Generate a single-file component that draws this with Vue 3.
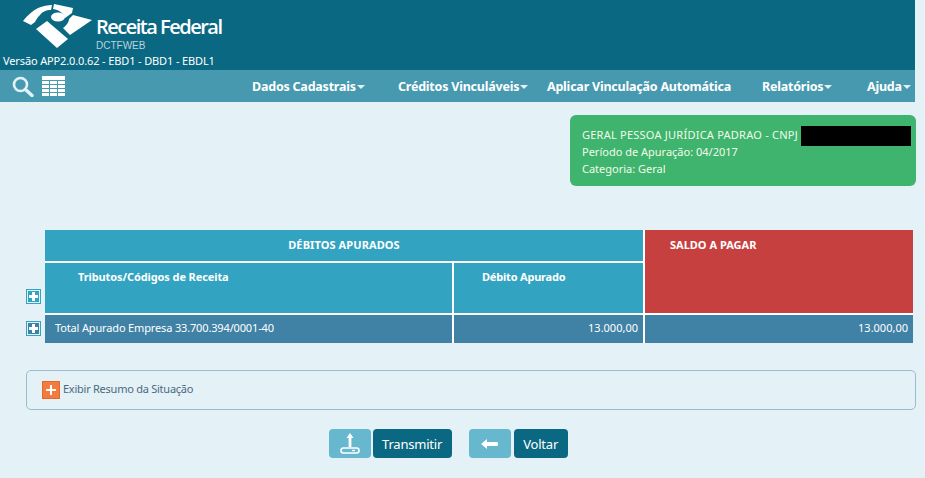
<script setup>
const menu = [
  { label: 'Dados Cadastrais', caret: true, cls: 'm1' },
  { label: 'Créditos Vinculáveis', caret: true, cls: 'm2' },
  { label: 'Aplicar Vinculação Automática', caret: false, cls: 'm3' },
  { label: 'Relatórios', caret: true, cls: 'm4' },
  { label: 'Ajuda', caret: true, cls: 'm5' }
]
</script>

<template>
  <div class="page">
    <header class="top">
      <div class="brand">
        <svg class="logo" width="96" height="53" viewBox="0 0 96 53">
          <path fill="#fff" d="M23 21 C28 15 32 11 38 8 C43 6 48 5 52 5 L51 10 C46 10 42 12 40 15 C37 18 36 20 35 22 L31 25 Z" />
          <path fill="#fff" d="M54 4 L73 8 L72 13 L65 18 C64 14 60 10 53 9 Z" />
          <path fill="#fff" d="M36 29 L47 21 L68 39 L57 48 Z" />
          <path fill="#fff" d="M73 15 L92 20 L70 35 L63 28 C66 26 69 22 69 19 Z" />
          <ellipse cx="58" cy="17" rx="7" ry="4.5" fill="#fff" />
        </svg>
        <div class="brand-name">
          <span class="title">Receita Federal</span>
          <span class="sub">DCTFWEB</span>
        </div>
      </div>
      <div class="version">Versão APP2.0.0.62 - EBD1 - DBD1 - EBDL1</div>
    </header>

    <nav class="nav">
      <div class="tools">
        <svg width="22" height="22" viewBox="0 0 22 22">
          <circle cx="8.5" cy="9.5" r="6.5" fill="none" stroke="#e4f1f7" stroke-width="2.6" />
          <path d="M13.5 14.5 L20 20.5" stroke="#e4f1f7" stroke-width="3.4" stroke-linecap="round" />
        </svg>
        <svg width="23" height="20" viewBox="0 0 23 20">
          <path fill="#fff" d="M0 0h23v4H0z" />
          <path fill="#fff" d="M0 5h7v3H0zM8 5h7v3H8zM16 5h7v3h-7zM0 9h7v3H0zM8 9h7v3H8zM16 9h7v3h-7zM0 13h7v3H0zM8 13h7v3H8zM16 13h7v3h-7zM0 17h7v3H0zM8 17h7v3H8zM16 17h7v3h-7z" />
        </svg>
      </div>
      <a v-for="m in menu" :key="m.label" class="menu-item" :class="m.cls">
        {{ m.label }}<i v-if="m.caret" class="caret"></i>
      </a>
    </nav>

    <main class="content">
      <div class="info-row">
        <div class="info">
          <div class="info-line">
            <span class="upper">GERAL PESSOA JURÍDICA PADRAO - CNPJ</span>
            <span class="redacted"></span>
          </div>
          <div>Período de Apuração: 04/2017</div>
          <div>Categoria: Geral</div>
        </div>
      </div>

      <section class="table-row">
        <div class="expanders">
          <span class="plus blue teal"></span>
          <span class="plus blue"></span>
        </div>
        <div class="grid">
          <div class="cell head span2">DÉBITOS APURADOS</div>
          <div class="cell red">SALDO A PAGAR</div>
          <div class="cell head sub1">Tributos/Códigos de Receita</div>
          <div class="cell head sub2">Débito Apurado</div>
          <div class="cell total">Total Apurado Empresa 33.700.394/0001-40</div>
          <div class="cell total right">13.000,00</div>
          <div class="cell total right">13.000,00</div>
        </div>
      </section>

      <section class="resume">
        <span class="plus orange"></span>
        <span class="resume-text">Exibir Resumo da Situação</span>
      </section>

      <div class="actions">
        <div class="btn-group">
          <button class="btn-icon">
            <svg width="20" height="21" viewBox="0 0 20 21">
              <path fill="#fff" d="M10 0 L13.5 5 H11.4 V14 H8.6 V5 H6.5 Z" />
              <rect x="1" y="15" width="18" height="5" rx="2.4" fill="none" stroke="#fff" stroke-width="1.6" />
              <path d="M12 17.5h3" stroke="#fff" stroke-width="1.3" />
            </svg>
          </button>
          <button class="btn-text">Transmitir</button>
        </div>
        <div class="btn-group wide">
          <button class="btn-icon">
            <svg width="18" height="10" viewBox="0 0 18 10">
              <path fill="#fff" d="M0 5 L6 0 V3 H16.5 Q18 5 16.5 7 H6 V10 Z" />
            </svg>
          </button>
          <button class="btn-text">Voltar</button>
        </div>
      </div>
    </main>
  </div>
</template>

<style>
html, body {
  background: #fff;
}
</style>

<style scoped>
.page {
  width: 925px;
  height: 478px;
  overflow: hidden;
  background: #e4f1f7;
  font-family: "Noto Sans", "Open Sans", sans-serif;
  color: #fff;
}
.top {
  width: 915px;
  height: 70px;
  background: #0b6882;
}
.brand {
  display: flex;
  height: 53px;
}
.logo {
  flex: none;
}
.brand-name {
  display: flex;
  flex-direction: column;
  padding-top: 16px;
}
.title {
  font-family: "Open Sans", sans-serif;
  font-size: 20px;
  font-weight: 600;
  line-height: 22px;
  letter-spacing: -1.5px;
}
.sub {
  font-family: "Liberation Sans", sans-serif;
  font-size: 10px;
  line-height: 11px;
  color: #b9d4dd;
  margin-top: 2px;
}
.version {
  font-size: 11px;
  line-height: 16px;
  padding-left: 3px;
  letter-spacing: -0.13px;
}
.nav {
  width: 915px;
  height: 32px;
  background: #4799b0;
  display: flex;
  align-items: center;
  font-size: 12.5px;
  font-weight: 700;
  letter-spacing: -0.22px;
}
.tools {
  display: flex;
  align-items: center;
  gap: 8px;
  padding-left: 12px;
  width: 252px;
  box-sizing: border-box;
}
.menu-item {
  white-space: nowrap;
}
.m1 { width: 146px; }
.m2 { width: 149px; }
.m3 { width: 215px; }
.m4 { width: 105px; }
.caret {
  display: inline-block;
  margin-left: 1px;
  vertical-align: middle;
  border-top: 4px solid #e4f1f7;
  border-left: 4px solid transparent;
  border-right: 4px solid transparent;
}
.content {
  display: flex;
  flex-direction: column;
}
.info-row {
  display: flex;
  padding: 13px 9px 0 570px;
}
.info {
  width: 346px;
  height: 71px;
  box-sizing: border-box;
  background: #3fb46e;
  border-radius: 6px;
  padding: 11px 5px 11px 12px;
  font-size: 11px;
  line-height: 17px;
  color: #f2fbe9;
}
.info-line {
  display: flex;
  height: 17px;
}
.upper {
  width: 219px;
  flex: none;
  white-space: nowrap;
  letter-spacing: 0.24px;
}
.redacted {
  width: 110px;
  height: 20px;
  background: #000;
  flex: none;
}
.table-row {
  display: flex;
  margin-top: 44px;
  padding-left: 26px;
}
.expanders {
  width: 19px;
  display: flex;
  flex-direction: column;
  justify-content: flex-end;
  gap: 17px;
  padding-bottom: 7px;
}
.plus {
  width: 15px;
  height: 15px;
  box-sizing: border-box;
  display: block;
}
.plus.blue {
  border: 1px solid #33a3c2;
  box-shadow: inset 0 0 0 1px #e4f1f7;
  background:
    linear-gradient(#fff, #fff) center / 9px 3px no-repeat,
    linear-gradient(#fff, #fff) center / 3px 9px no-repeat,
    #3c82a5;
}
.plus.blue.teal {
  background:
    linear-gradient(#fff, #fff) center / 9px 3px no-repeat,
    linear-gradient(#fff, #fff) center / 3px 9px no-repeat,
    #33a3c2;
}
.plus.orange {
  width: 18px;
  height: 18px;
  flex: none;
  border: 1px solid #e06a2d;
  background:
    linear-gradient(#fff, #fff) center / 10px 2px no-repeat,
    linear-gradient(#fff, #fff) center / 2px 10px no-repeat,
    #f47b3d;
}
.grid {
  width: 868px;
  display: grid;
  grid-template-columns: 407px 189px 268px;
  grid-template-rows: 31px 50px 28px;
  gap: 2px;
  background: #fff;
  font-size: 11px;
}
.cell {
  box-sizing: border-box;
}
.head {
  background: #33a3c2;
  font-weight: 700;
  padding-top: 7px;
}
.span2 {
  grid-column: span 2;
  text-align: center;
  letter-spacing: 0.1px;
}
.red {
  grid-row: span 2;
  background: #c74040;
  font-weight: 700;
  padding: 7px 0 0 25px;
}
.sub1 {
  padding-left: 33px;
  padding-top: 6px;
  letter-spacing: -0.1px;
}
.sub2 {
  padding-left: 28px;
  padding-top: 6px;
  letter-spacing: -0.2px;
}
.total {
  background: #3f82a6;
  padding: 5px 5px 0 10px;
  letter-spacing: -0.15px;
}
.right {
  text-align: right;
  letter-spacing: 0;
}
.resume {
  width: 890px;
  height: 40px;
  box-sizing: border-box;
  margin: 27px 0 0 26px;
  border: 1px solid #9bbccc;
  border-radius: 5px;
  display: flex;
  align-items: center;
  gap: 3px;
  padding-left: 15px;
  font-size: 11px;
  color: #4a6a80;
}
.resume-text {
  letter-spacing: -0.25px;
  margin-top: -3px;
}
.actions {
  display: flex;
  margin-top: 19px;
  padding-left: 329px;
  gap: 17px;
}
.btn-group {
  display: flex;
  gap: 2px;
}
.btn-group.wide {
  gap: 3px;
}
button {
  border: 0;
  padding: 0;
  height: 29px;
  border-radius: 4px;
  color: #fff;
  font-family: inherit;
  display: flex;
  align-items: center;
  justify-content: center;
}
.btn-icon {
  width: 42px;
  background: #67b8cf;
}
.btn-text {
  background: #0b6882;
  font-size: 13px;
  padding: 0 10px 0 9px;
  letter-spacing: -0.2px;
}
</style>
